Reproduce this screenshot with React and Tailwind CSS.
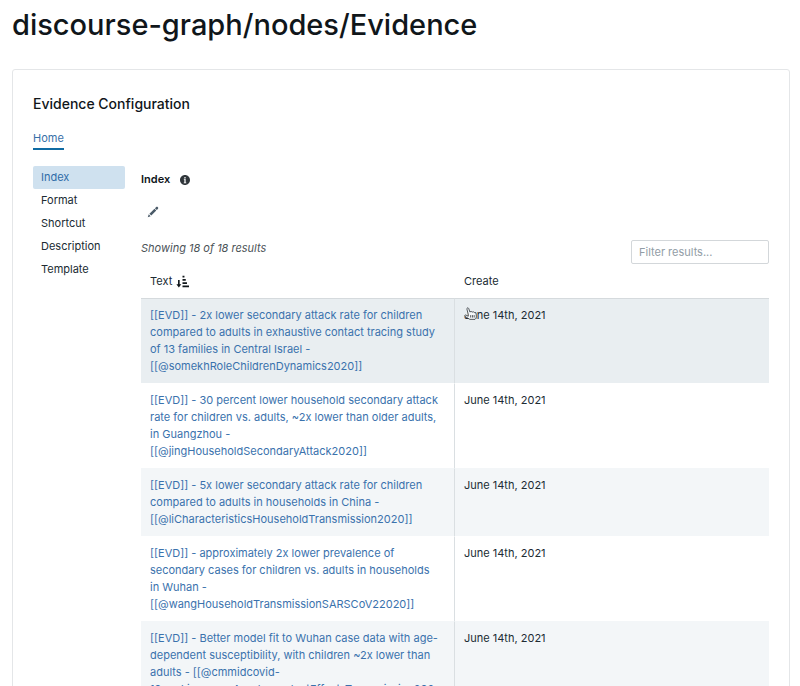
import React, { useState } from 'react';

const tabs = ['Index', 'Format', 'Shortcut', 'Description', 'Template'];

const results = [
  {
    text: '[[EVD]] - 2x lower secondary attack rate for children compared to adults in exhaustive contact tracing study of 13 families in Central Israel - [[@somekhRoleChildrenDynamics2020]]',
    created: 'June 14th, 2021',
  },
  {
    text: '[[EVD]] - 30 percent lower household secondary attack rate for children vs. adults, ~2x lower than older adults, in Guangzhou - [[@jingHouseholdSecondaryAttack2020]]',
    created: 'June 14th, 2021',
  },
  {
    text: '[[EVD]] - 5x lower secondary attack rate for children compared to adults in households in China - [[@liCharacteristicsHouseholdTransmission2020]]',
    created: 'June 14th, 2021',
  },
  {
    text: '[[EVD]] - approximately 2x lower prevalence of secondary cases for children vs. adults in households in Wuhan - [[@wangHouseholdTransmissionSARSCoV22020]]',
    created: 'June 14th, 2021',
  },
  {
    text: '[[EVD]] - Better model fit to Wuhan case data with age-dependent susceptibility, with children ~2x lower than adults - [[@cmmidcovid-19workinggroupAgedependentEffectsTransmission2020]]',
    created: 'June 14th, 2021',
  },
];

const InfoIcon = () => (
  <svg width="10" height="10" viewBox="0 0 16 16" fill="#30363b">
    <path
      fillRule="evenodd"
      d="M8 0C3.58 0 0 3.58 0 8s3.58 8 8 8 8-3.58 8-8-3.58-8-8-8zM7 3h2v2H7V3zm3 10H6v-1h1V7H6V6h3v6h1v1z"
    />
  </svg>
);

const EditIcon = () => (
  <svg width="12" height="12" viewBox="0 0 16 16" fill="#4a5a68">
    <path d="M3.25 10.26l2.47 2.47 6.69-6.69-2.46-2.48-6.7 6.7zM.99 14.99l3.86-1.39-2.46-2.44L.99 15zm12.25-14c-.48 0-.92.2-1.24.51l-1.44 1.44 2.47 2.47 1.44-1.44c.32-.32.51-.75.51-1.24.01-.95-.77-1.74-1.74-1.74z" />
  </svg>
);

const SortIcon = () => (
  <svg width="13" height="13" viewBox="0 0 16 16" fill="#10161a">
    <path d="M2.5 6h2v5.5h2L3.5 15.5l-3-4h2zM8 1h2.4v2H8zM8 5h4v2H8zM8 9h5.5v2H8zM8 13h8v2H8z" />
  </svg>
);

const HandPointer = () => (
  <svg width="13" height="13" viewBox="0 0 16 16" fill="#f5f8fa" stroke="#30363b" strokeLinejoin="round">
    <path d="M5.2 9L3.6 2.6c-.4-1.6 1.6-2.2 2.2-.7L7.2 6l1.6-.5 1.4.7 1.7-.2 1.1.9c1.4 0 1.9.8 2 2l.2 3.2c0 1.3-.6 2.4-1.6 3.1H7.2L1.2 11.6c-1-1 .2-2.2 1.3-1.6l2.7 1.4z" />
    <path d="M8.2 10v3M10.4 10v3M12.5 10v3" fill="none" />
  </svg>
);

const App = () => {
  const [activeTab, setActiveTab] = useState('Index');
  const [filter, setFilter] = useState('');

  const rows = results.filter((r) => r.text.toLowerCase().includes(filter.toLowerCase()));

  return (
    <div className="h-screen overflow-hidden bg-white pl-3 pr-[10px] font-['Inter',sans-serif] text-[11px] leading-[17px] text-[#202b33]">
      <h1 className="pt-1 text-[29px] font-medium leading-[42px] text-[#10161a]">
        discourse-graph/nodes/Evidence
      </h1>

      <div className="mt-[23px] rounded-[3px] border border-[#e4e6e8] px-5 pt-6">
        <h2 className="text-sm font-medium leading-5 text-[#10161a]">Evidence Configuration</h2>
        <button className="mt-4 border-b-2 border-[#106ba3] pb-px text-[#386fa8]">Home</button>

        <div className="mt-4 flex gap-4">
          <nav className="flex w-[92px] shrink-0 flex-col">
            {tabs.map((tab) => (
              <button
                key={tab}
                onClick={() => setActiveTab(tab)}
                className={`rounded-[2px] px-2 py-[3px] text-left ${
                  tab === activeTab ? 'bg-[#cfe1ef] text-[#2f6ca8]' : ''
                }`}
              >
                {tab}
              </button>
            ))}
          </nav>

          <div className="min-w-0 flex-1 pt-[5px]">
            <div className="flex items-center gap-[10px] font-semibold text-[#10161a]">
              {activeTab}
              <InfoIcon />
            </div>
            <button aria-label="Edit" className="mt-[18px] ml-1.5 block">
              <EditIcon />
            </button>

            <div className="mt-[22px] flex items-start justify-between">
              <p className="italic text-[#4c5358]">Showing 18 of 18 results</p>
              <input
                type="text"
                aria-label="Filter results"
                placeholder="Filter results..."
                value={filter}
                onChange={(e) => setFilter(e.target.value)}
                className="h-6 w-[138px] rounded-[2px] border border-[#d3d7da] px-[7px] placeholder:text-[#929da6]"
              />
            </div>

            <table className="w-full table-fixed border-separate border-spacing-0">
              <thead>
                <tr>
                  <th className="px-[9px] pt-[9px] pb-2 text-left font-normal">
                    <span className="flex items-center gap-1">
                      Text <SortIcon />
                    </span>
                  </th>
                  <th className="px-[9px] pt-[9px] pb-2 text-left font-normal">Create</th>
                </tr>
              </thead>
              <tbody>
                {rows.map((row, i) => (
                  <tr
                    key={row.text}
                    className={`align-top ${
                      i === 0 ? 'bg-[#e9eef1] [&>td]:border-t-[#d5dadd]' : 'odd:bg-[#f3f6f8] [&>td]:border-t-transparent'
                    }`}
                  >
                    <td className="border-t border-r border-r-[#dadfe2] py-2 pl-[9px] pr-[14px] wrap-break-word">
                      <a href="#" className="text-[#3a72ad]">{row.text}</a>
                    </td>
                    <td className="relative border-t px-[9px] py-2">
                      {row.created}
                      {i === 0 && (
                        <span className="absolute left-[9px] top-2">
                          <HandPointer />
                        </span>
                      )}
                    </td>
                  </tr>
                ))}
              </tbody>
            </table>
          </div>
        </div>
      </div>
    </div>
  );
};

export default App;
